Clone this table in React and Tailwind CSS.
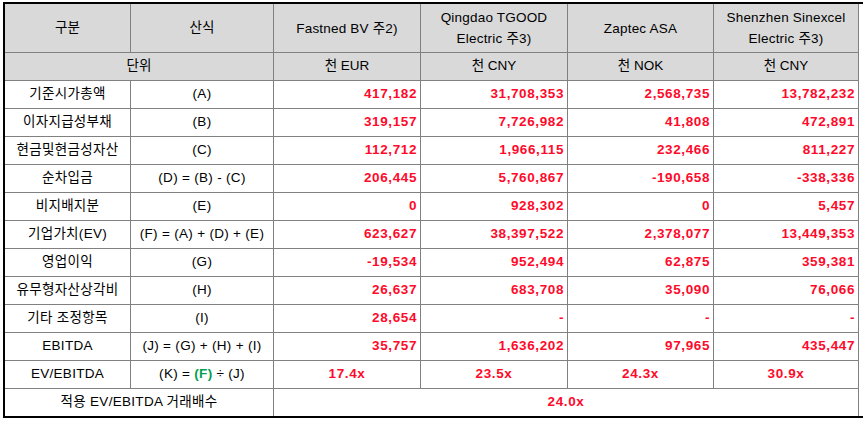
const font = { fontFamily: '"Liberation Sans", "Noto Sans CJK KR", sans-serif' };

const companies = [
  ['Fastned BV 주2)'],
  ['Qingdao TGOOD', 'Electric 주3)'],
  ['Zaptec ASA'],
  ['Shenzhen Sinexcel', 'Electric 주3)'],
];

const units = ['천 EUR', '천 CNY', '천 NOK', '천 CNY'];

const rows = [
  ['기준시가총액', '(A)', ['417,182', '31,708,353', '2,568,735', '13,782,232']],
  ['이자지급성부채', '(B)', ['319,157', '7,726,982', '41,808', '472,891']],
  ['현금및현금성자산', '(C)', ['112,712', '1,966,115', '232,466', '811,227']],
  ['순차입금', '(D) = (B) - (C)', ['206,445', '5,760,867', '-190,658', '-338,336']],
  ['비지배지분', '(E)', ['0', '928,302', '0', '5,457']],
  ['기업가치(EV)', '(F) = (A) + (D) + (E)', ['623,627', '38,397,522', '2,378,077', '13,449,353']],
  ['영업이익', '(G)', ['-19,534', '952,494', '62,875', '359,381']],
  ['유무형자산상각비', '(H)', ['26,637', '683,708', '35,090', '76,066']],
  ['기타 조정항목', '(I)', ['28,654', '-', '-', '-']],
  ['EBITDA', '(J) = (G) + (H) + (I)', ['35,757', '1,636,202', '97,965', '435,447']],
];

const multiples = ['17.4x', '23.5x', '24.3x', '30.9x'];

const cell = 'border-r border-b border-[#808080] flex items-center';

export default function App() {
  return (
    <div className="bg-white w-[863px] h-[421px] pt-[2px] pl-[3px]" style={font}>
      <div className="w-[860px] border-l-2 border-y-2 border-black text-[13.5px] text-black">
        <div className="grid grid-cols-[126px_143px_147px_147px_146px_145px]">
          {/* header */}
          <div className={`${cell} justify-center h-[49px] bg-[#d9d9d9]`}>구분</div>
          <div className={`${cell} justify-center h-[49px] bg-[#d9d9d9]`}>산식</div>
          {companies.map((c, i) => (
            <div key={i} className={`${cell} flex-col justify-center h-[49px] bg-[#d9d9d9] leading-[21px] text-center tracking-[0.2px]`}>
              {c.map((l) => (
                <span key={l}>{l}</span>
              ))}
            </div>
          ))}

          {/* units */}
          <div className={`${cell} col-span-2 justify-center h-[28px] bg-[#d9d9d9]`}>단위</div>
          {units.map((u, i) => (
            <div key={i} className={`${cell} justify-center h-[28px] bg-[#d9d9d9]`}>{u}</div>
          ))}

          {/* data */}
          {rows.map(([label, formula, vals]) => (
            <div key={label} className="contents">
              <div className={`${cell} justify-center h-[28px] tracking-[0.3px]`}>{label}</div>
              <div className={`${cell} justify-center h-[28px] tracking-[0.3px]`}>{formula}</div>
              {vals.map((v, i) => (
                <div key={i} className={`${cell} justify-end pr-[3px] h-[28px] font-bold text-[#ff0a2a] tracking-[0.6px]`}>{v}</div>
              ))}
            </div>
          ))}

          <div className={`${cell} justify-center h-[28px] tracking-[0.3px]`}>EV/EBITDA</div>
          <div className={`${cell} justify-center h-[28px] whitespace-pre tracking-[0.3px]`}>
            {'(K) = '}
            <span className="font-bold text-[#00a050]">(F)</span>
            {' ÷ (J)'}
          </div>
          {multiples.map((m) => (
            <div key={m} className={`${cell} justify-center h-[28px] font-bold text-[#ff0a2a] tracking-[0.6px]`}>{m}</div>
          ))}

          <div className="col-span-2 border-r border-[#808080] flex items-center justify-center h-[27px] tracking-[0.3px]">
            적용 EV/EBITDA 거래배수
          </div>
          <div className="col-span-4 border-r border-[#808080] flex items-center justify-center h-[27px] font-bold text-[#ff0a2a] tracking-[0.6px]">
            24.0x
          </div>
        </div>
      </div>
    </div>
  );
}
